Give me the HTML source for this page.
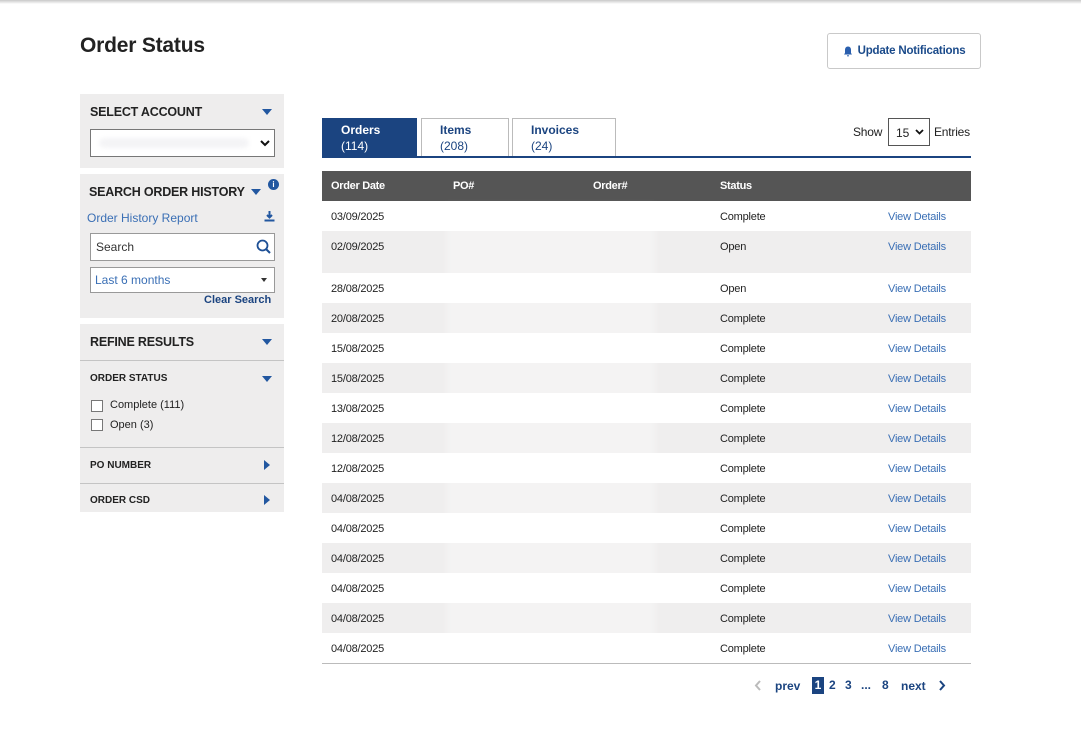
<!DOCTYPE html>
<html><head><meta charset="utf-8"><style>
*{margin:0;padding:0;box-sizing:border-box}
body{width:1081px;height:736px;background:#fff;font-family:"Liberation Sans",Arial,sans-serif;position:relative;overflow:hidden;color:#222}
.a{position:absolute}
.topbar{left:0;top:0;width:1081px;height:4px;background:linear-gradient(#c8c8c8,#fff)}
h1{position:absolute;left:80px;top:34px;font-size:21px;font-weight:bold;color:#222;letter-spacing:-0.2px}
.btn{left:827px;top:33px;width:154px;height:36px;border:1px solid #c9c9c9;border-radius:3px;font-size:11.5px;font-weight:bold;color:#1a4a8a;display:flex;align-items:center;justify-content:center;letter-spacing:-0.2px}
.panel{left:80px;width:204px;background:#eeeded}
.ph{font-size:12.5px;font-weight:bold;color:#222;letter-spacing:-0.2px}
.tri{width:0;height:0;border-left:5px solid transparent;border-right:5px solid transparent;border-top:6px solid #2257a0;position:absolute}
.rtri{width:0;height:0;border-top:5px solid transparent;border-bottom:5px solid transparent;border-left:6px solid #2257a0;position:absolute}
.input{background:#fff;border:1px solid #8a8a8a;position:absolute}
.sm{font-size:10px;font-weight:bold;color:#222}
.link{color:#3a6fb5}
.tab{top:118px;height:40px;border:1px solid #bbb;border-bottom:none;font-size:12px;padding:3px 0 0 18px;line-height:16px;color:#1b4480}
.tab b{display:block}
.t{font-size:11px;letter-spacing:-0.2px}
.row{position:absolute;left:322px;width:649px;height:30px}
.g{background:#efeeee}
.row span{position:absolute;top:10px}
</style></head><body>
<div class="a topbar"></div>
<h1>Order Status</h1>
<div class="a btn"><svg width="10" height="11" viewBox="0 0 10 11" style="margin-right:5px"><path d="M5 0.5C3 0.5 2 2 2 4V7L1 8.5H9L8 7V4C8 2 7 0.5 5 0.5Z M4 9.2H6C6 10 5.5 10.5 5 10.5S4 10 4 9.2Z" fill="#2a5fae"/></svg>Update Notifications</div>

<div class="a panel" style="top:94px;height:74px">
 <div class="a ph" style="left:10px;top:11px">SELECT ACCOUNT</div>
 <div class="tri" style="left:182px;top:15px"></div>
 <div class="input" style="left:10px;top:35px;width:185px;height:28px;border-color:#777">
   <div class="a" style="left:8px;top:8px;width:150px;height:10px;background:#f4f4f6;border-radius:5px;filter:blur(2px)"></div>
   <svg class="a" style="left:169px;top:10px" width="10" height="7" viewBox="0 0 10 7"><path d="M1 1L5 5L9 1" stroke="#111" stroke-width="2" fill="none"/></svg>
 </div>
</div>

<div class="a panel" style="top:174px;height:144px">
 <div class="a ph" style="left:9px;top:11px">SEARCH ORDER HISTORY</div>
 <div class="tri" style="left:171px;top:15px"></div>
 <div class="a" style="left:188px;top:5px;width:11px;height:11px;border-radius:50%;background:#2257a0;color:#fff;font-size:8px;font-weight:bold;text-align:center;line-height:11px">i</div>
 <div class="a link" style="left:7px;top:37px;font-size:12px">Order History Report</div>
 <svg class="a" style="left:184px;top:37px" width="11" height="11" viewBox="0 0 11 11"><path d="M5.5 0V6M3 4L5.5 6.5L8 4" stroke="#2257a0" stroke-width="2" fill="none"/><rect x="0.5" y="8.5" width="10" height="2" fill="#2257a0"/></svg>
 <div class="input" style="left:10px;top:59px;width:185px;height:28px;border-color:#999">
   <div class="a" style="left:5px;top:6px;font-size:12px;color:#333">Search</div>
   <svg class="a" style="left:165px;top:5px" width="15" height="15" viewBox="0 0 15 15"><circle cx="6.5" cy="6.5" r="5" stroke="#1d4f95" stroke-width="1.8" fill="none"/><path d="M10 10L14 14" stroke="#1d4f95" stroke-width="2"/></svg>
 </div>
 <div class="input" style="left:10px;top:93px;width:185px;height:26px;border-color:#999">
   <div class="a link" style="left:4px;top:5px;font-size:12px">Last 6 months</div>
   <div class="a" style="left:170px;top:10px;width:0;height:0;border-left:3px solid transparent;border-right:3px solid transparent;border-top:4px solid #333"></div>
 </div>
 <div class="a" style="left:124px;top:120px;font-size:11px;font-weight:bold;color:#1b4480">Clear Search</div>
</div>

<div class="a panel" style="top:324px;height:188px">
 <div class="a ph" style="left:10px;top:11px">REFINE RESULTS</div>
 <div class="tri" style="left:182px;top:15px"></div>
 <div class="a" style="left:0;top:36px;width:204px;height:1px;background:#c4c4c4"></div>
 <div class="a sm" style="left:10px;top:49px">ORDER STATUS</div>
 <div class="tri" style="left:182px;top:52px"></div>
 <div class="a" style="left:11px;top:76px;width:12px;height:12px;background:#fff;border:1px solid #777"></div>
 <div class="a" style="left:30px;top:75px;font-size:11px">Complete (111)</div>
 <div class="a" style="left:11px;top:95px;width:12px;height:12px;background:#fff;border:1px solid #777"></div>
 <div class="a" style="left:30px;top:95px;font-size:11px">Open (3)</div>
 <div class="a" style="left:0;top:123px;width:204px;height:1px;background:#c4c4c4"></div>
 <div class="a sm" style="left:10px;top:136px">PO NUMBER</div>
 <div class="rtri" style="left:184px;top:136px"></div>
 <div class="a" style="left:0;top:159px;width:204px;height:1px;background:#c4c4c4"></div>
 <div class="a sm" style="left:10px;top:171px">ORDER CSD</div>
 <div class="rtri" style="left:184px;top:171px"></div>
</div>

<div class="a tab" style="left:322px;width:95px;background:#1b4480;border-color:#1b4480;color:#fff"><b>Orders</b>(114)</div>
<div class="a tab" style="left:421px;width:88px"><b>Items</b>(208)</div>
<div class="a tab" style="left:512px;width:104px"><b>Invoices</b>(24)</div>
<div class="a" style="left:322px;top:156px;width:649px;height:2px;background:#1b4480"></div>
<div class="a t" style="left:853px;top:125px;font-size:12px">Show</div>
<div class="a" style="left:888px;top:118px;width:42px;height:28px;border:1px solid #555;font-size:12px;padding:7px 0 0 7px">15</div>
<svg class="a" style="left:915px;top:129px" width="9" height="6" viewBox="0 0 9 6"><path d="M1 1L4.5 4.5L8 1" stroke="#111" stroke-width="1.8" fill="none"/></svg>
<div class="a t" style="left:934px;top:125px;font-size:12px">Entries</div>

<div class="a" style="left:322px;top:171px;width:649px;height:30px;background:#555;color:#fff;font-size:11px;font-weight:bold;letter-spacing:-0.3px">
 <span class="a" style="left:9px;top:9px">Order Date</span>
 <span class="a" style="left:131px;top:9px">PO#</span>
 <span class="a" style="left:271px;top:9px">Order#</span>
 <span class="a" style="left:398px;top:9px">Status</span>
</div>

<div class="row t" style="top:201px"><span style="left:9px">03/09/2025</span><span style="left:398px">Complete</span><span class="link" style="left:566px">View Details</span></div>
<div class="row t g" style="top:231px;height:42px"><span style="left:9px">02/09/2025</span><span style="left:398px">Open</span><span class="link" style="left:566px">View Details</span></div>
<div class="row t" style="top:273px"><span style="left:9px">28/08/2025</span><span style="left:398px">Open</span><span class="link" style="left:566px">View Details</span></div>
<div class="row t g" style="top:303px"><span style="left:9px">20/08/2025</span><span style="left:398px">Complete</span><span class="link" style="left:566px">View Details</span></div>
<div class="row t" style="top:333px"><span style="left:9px">15/08/2025</span><span style="left:398px">Complete</span><span class="link" style="left:566px">View Details</span></div>
<div class="row t g" style="top:363px"><span style="left:9px">15/08/2025</span><span style="left:398px">Complete</span><span class="link" style="left:566px">View Details</span></div>
<div class="row t" style="top:393px"><span style="left:9px">13/08/2025</span><span style="left:398px">Complete</span><span class="link" style="left:566px">View Details</span></div>
<div class="row t g" style="top:423px"><span style="left:9px">12/08/2025</span><span style="left:398px">Complete</span><span class="link" style="left:566px">View Details</span></div>
<div class="row t" style="top:453px"><span style="left:9px">12/08/2025</span><span style="left:398px">Complete</span><span class="link" style="left:566px">View Details</span></div>
<div class="row t g" style="top:483px"><span style="left:9px">04/08/2025</span><span style="left:398px">Complete</span><span class="link" style="left:566px">View Details</span></div>
<div class="row t" style="top:513px"><span style="left:9px">04/08/2025</span><span style="left:398px">Complete</span><span class="link" style="left:566px">View Details</span></div>
<div class="row t g" style="top:543px"><span style="left:9px">04/08/2025</span><span style="left:398px">Complete</span><span class="link" style="left:566px">View Details</span></div>
<div class="row t" style="top:573px"><span style="left:9px">04/08/2025</span><span style="left:398px">Complete</span><span class="link" style="left:566px">View Details</span></div>
<div class="row t g" style="top:603px"><span style="left:9px">04/08/2025</span><span style="left:398px">Complete</span><span class="link" style="left:566px">View Details</span></div>
<div class="row t" style="top:633px"><span style="left:9px">04/08/2025</span><span style="left:398px">Complete</span><span class="link" style="left:566px">View Details</span></div>
<div class="a" style="left:446px;top:205px;width:210px;height:454px;background:rgba(255,255,255,0.3);filter:blur(3px)"></div>
<div class="a" style="left:322px;top:663px;width:649px;height:1px;background:#bbb"></div>

<div class="a" style="left:740px;top:676px;width:240px;height:20px;font-size:12px;font-weight:bold;color:#1b4480">
 <svg class="a" style="left:14px;top:4px" width="8" height="11" viewBox="0 0 8 11"><path d="M6 1L2 5.5L6 10" stroke="#bbb" stroke-width="2" fill="none"/></svg>
 <span class="a" style="left:35px;top:3px">prev</span>
 <span class="a" style="left:72px;top:1px;width:12px;height:17px;background:#1b4480;color:#fff;text-align:center;line-height:17px">1</span>
 <span class="a" style="left:89px;top:2px">2</span>
 <span class="a" style="left:105px;top:2px">3</span>
 <span class="a" style="left:121px;top:2px">...</span>
 <span class="a" style="left:142px;top:2px">8</span>
 <span class="a" style="left:161px;top:3px">next</span>
 <svg class="a" style="left:198px;top:4px" width="8" height="11" viewBox="0 0 8 11"><path d="M2 1L6 5.5L2 10" stroke="#1b4480" stroke-width="2" fill="none"/></svg>
</div>
</body></html>
